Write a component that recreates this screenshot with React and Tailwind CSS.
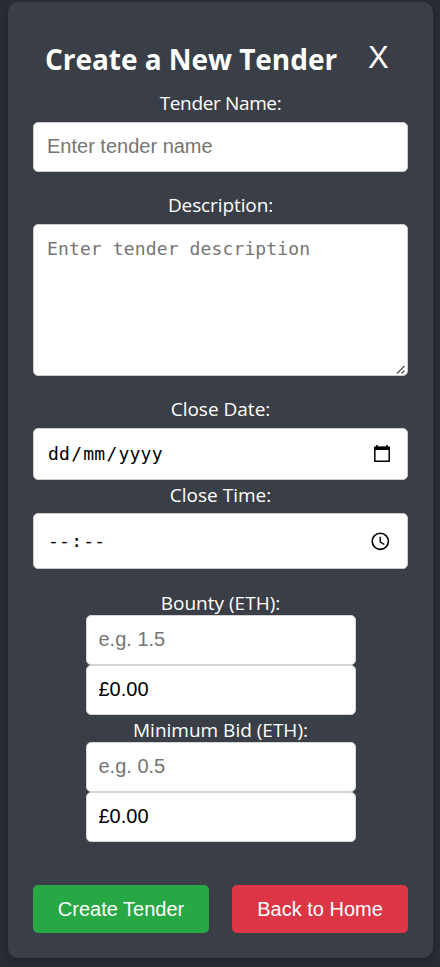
import React from "react";

const field =
  "block w-full rounded-[5px] border border-[#cccccc] bg-white pr-3 pb-0.5 font-['Liberation_Sans',Arial,sans-serif] text-[20px] text-black outline-none placeholder:text-[#757575] placeholder:opacity-100";

function Label({ children, className }) {
  return (
    <div className={`flex justify-center whitespace-nowrap text-[19px] leading-[26px] ${className}`}>
      <span>{children}</span>
    </div>
  );
}

function CalendarIcon() {
  return (
    <svg width="18" height="20" viewBox="0 0 18 20" fill="none">
      <path d="M1.8 3.5h14.4v13.8H1.8z" stroke="black" strokeWidth="1.5" strokeLinejoin="round" />
      <path d="M1 3.6q0-1 1-1h14q1 0 1 1v2.4H1zM3.2 1h1.6v3H3.2zM13.2 1h1.6v3h-1.6z" fill="black" />
    </svg>
  );
}

function ClockIcon() {
  return (
    <svg width="20" height="20" viewBox="0 0 20 20" fill="none" stroke="black">
      <circle cx="10.3" cy="10.3" r="8.1" strokeWidth="1.6" />
      <path d="M10.2 5.7v5.2l4 2.6" strokeWidth="1.4" />
    </svg>
  );
}

function EthField({ label, placeholder, className }) {
  return (
    <div className={`w-[270px] self-center ${className}`}>
      <Label className="h-[26px] pt-px">{label}</Label>
      <input className={`${field} h-[50px] pl-3 !border-[#d5d5d5]`} placeholder={placeholder} />
      <input className={`${field} h-[50px] pl-3 !border-[#d5d5d5]`} defaultValue="£0.00" />
    </div>
  );
}

export default function App() {
  return (
    <div className="h-[967px] w-[440px] overflow-hidden bg-[#282c34] pl-2 pt-0.5 font-['Open_Sans','Noto_Sans',sans-serif] text-white">
      <form className="flex h-[956px] w-[425px] flex-col rounded-[10px] bg-[#3a3f47] px-[25px] shadow-[0_4px_8px_rgba(0,0,0,0.2)]">
        <div className="flex h-[88px] items-start pl-3 pt-[37px]">
          <h2 className="w-[323px] whitespace-nowrap text-[28px] font-bold leading-10 tracking-[-0.04px]">
            Create a New Tender
          </h2>
          <button type="button" className="-mt-px font-['Liberation_Sans',Arial,sans-serif] text-[31px] leading-10">
            X
          </button>
        </div>
        <Label className="tracking-[-0.35px]">Tender Name:</Label>
        <input className={`${field} mt-1.5 h-[50px] pl-[13px]`} placeholder="Enter tender name" />
        <Label className="mt-5 tracking-[-0.1px]">Description:</Label>
        <div className="relative mt-1.5">
          <textarea
            className="block h-[152px] w-full resize-none rounded-[5px] border border-[#cccccc] bg-white py-3 pl-[13px] pr-3 font-['DejaVu_Sans_Mono',monospace] text-[18px] leading-6 tracking-[0.13px] text-black outline-none placeholder:text-[#757575] placeholder:opacity-100"
            placeholder="Enter tender description"
          />
          <svg className="absolute bottom-px right-[2px]" width="10" height="10" viewBox="0 0 10 10" stroke="#555555" strokeWidth="1.5">
            <path d="M1 8.5L8.5 1M5.5 8.5L8.5 5.5" />
          </svg>
        </div>
        <Label className="mt-5">Close Date:</Label>
        <div className="mt-1.5 flex h-[52px] items-center justify-between rounded-[5px] border border-[#cccccc] bg-white pl-[13px] pr-4 font-['DejaVu_Sans_Mono',monospace] text-[18px] tracking-[0.24px] text-black">
          <div className="flex pb-0.5">
            <span className="px-px">dd</span>
            <span>/</span>
            <span className="px-px">mm</span>
            <span>/</span>
            <span className="px-px">yyyy</span>
          </div>
          <CalendarIcon />
        </div>
        <Label className="mt-0.5">Close Time:</Label>
        <div className="mt-[5px] flex h-14 items-center justify-between rounded-[5px] border border-[#cccccc] bg-white pl-[13px] pr-[17px] font-['DejaVu_Sans_Mono',monospace] text-[18px] tracking-[0.24px] text-black">
          <div className="flex pb-0.5">
            <span className="px-px">--</span>
            <span>:</span>
            <span className="px-px">--</span>
          </div>
          <ClockIcon />
        </div>
        <EthField label="Bounty (ETH):" placeholder="e.g. 1.5" className="mt-5" />
        <EthField label="Minimum Bid (ETH):" placeholder="e.g. 0.5" className="mt-px" />
        <div className="mt-[43px] flex justify-between font-['Liberation_Sans',Arial,sans-serif] text-[20px]">
          <button type="button" className="h-12 w-44 rounded-[5px] bg-[#28a745]">Create Tender</button>
          <button type="button" className="h-12 w-44 rounded-[5px] bg-[#dc3545]">Back to Home</button>
        </div>
      </form>
    </div>
  );
}
